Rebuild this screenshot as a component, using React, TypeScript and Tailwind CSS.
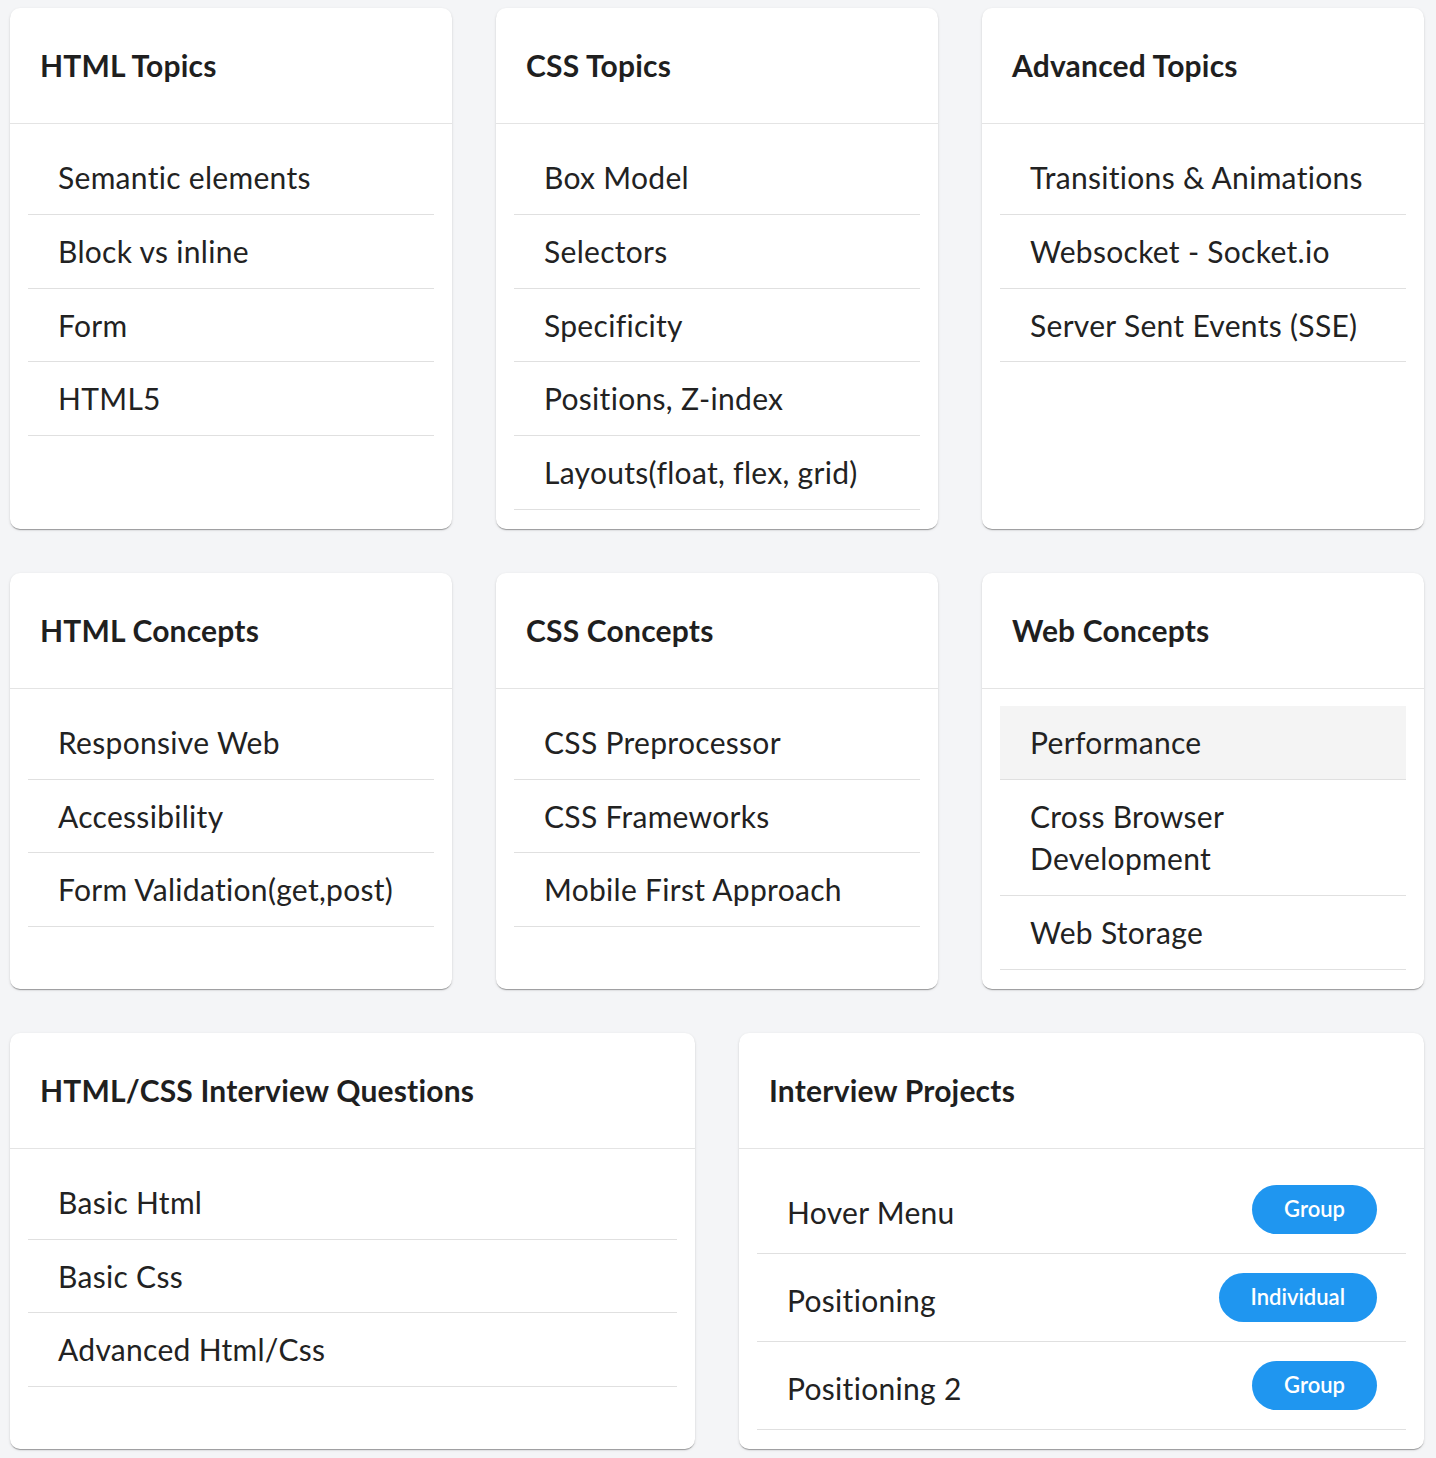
import React from "react";

type Item = { label: string; badge?: string; active?: boolean };

const topicsRow: { title: string; items: Item[] }[] = [
  {
    title: "HTML Topics",
    items: [
      { label: "Semantic elements" },
      { label: "Block vs inline" },
      { label: "Form" },
      { label: "HTML5" },
    ],
  },
  {
    title: "CSS Topics",
    items: [
      { label: "Box Model" },
      { label: "Selectors" },
      { label: "Specificity" },
      { label: "Positions, Z-index" },
      { label: "Layouts(float, flex, grid)" },
    ],
  },
  {
    title: "Advanced Topics",
    items: [
      { label: "Transitions & Animations" },
      { label: "Websocket - Socket.io" },
      { label: "Server Sent Events (SSE)" },
    ],
  },
];

const conceptsRow: { title: string; items: Item[] }[] = [
  {
    title: "HTML Concepts",
    items: [
      { label: "Responsive Web" },
      { label: "Accessibility" },
      { label: "Form Validation(get,post)" },
    ],
  },
  {
    title: "CSS Concepts",
    items: [
      { label: "CSS Preprocessor" },
      { label: "CSS Frameworks" },
      { label: "Mobile First Approach" },
    ],
  },
  {
    title: "Web Concepts",
    items: [
      { label: "Performance", active: true },
      { label: "Cross Browser Development" },
      { label: "Web Storage" },
    ],
  },
];

const questions: Item[] = [
  { label: "Basic Html" },
  { label: "Basic Css" },
  { label: "Advanced Html/Css" },
];

const projects: Item[] = [
  { label: "Hover Menu", badge: "Group" },
  { label: "Positioning", badge: "Individual" },
  { label: "Positioning 2", badge: "Group" },
];

function Card({
  title,
  items,
  tall,
}: {
  title: string;
  items: Item[];
  tall?: boolean;
}) {
  return (
    <div className="bg-white rounded-[10px] shadow-[0_2px_1px_-1px_rgba(0,0,0,0.2),0_1px_1px_0_rgba(0,0,0,0.14),0_1px_3px_0_rgba(0,0,0,0.12)] flex flex-col">
      <div className="h-[116px] flex items-center px-[30px] border-b border-[#e4e4e4]">
        <h2 className="text-[30px] font-bold tracking-[0.2px] text-[#1f1f1f]">{title}</h2>
      </div>
      <ul className="px-[18px] pt-[17px] pb-[19px]">
        {items.map((item) => (
          <li
            key={item.label}
            className={
              "flex items-center justify-between border-b border-[#e0e0e0] pl-[30px] pr-[29px] text-[30px] tracking-[0.3px] leading-[42.75px] text-[#222] " +
              (tall ? "h-[88px] " : "py-[15px] ") +
              (item.active ? "bg-[#f4f4f4]" : "")
            }
          >
            <span className={tall ? "pt-[6px]" : ""}>{item.label}</span>
            {item.badge ? (
              <span className="bg-[#1f96f0] text-white rounded-full h-[49px] px-[32px] flex items-center text-[22px] tracking-normal font-semibold">
                {item.badge}
              </span>
            ) : null}
          </li>
        ))}
      </ul>
    </div>
  );
}

export default function App() {
  return (
    <div
      className="min-h-screen bg-[#f4f5f7] pl-[10px] pr-[12px] pt-[8px] pb-[8px] flex flex-col gap-[44px]"
      style={{ fontFamily: "Lato, 'Noto Sans', sans-serif" }}
    >
      <div className="grid grid-cols-3 gap-[44px]">
        {topicsRow.map((c) => (
          <Card key={c.title} title={c.title} items={c.items} />
        ))}
      </div>
      <div className="grid grid-cols-3 gap-[44px]">
        {conceptsRow.map((c) => (
          <Card key={c.title} title={c.title} items={c.items} />
        ))}
      </div>
      <div className="grid grid-cols-2 gap-[44px]">
        <Card title="HTML/CSS Interview Questions" items={questions} />
        <Card title="Interview Projects" items={projects} tall />
      </div>
    </div>
  );
}
